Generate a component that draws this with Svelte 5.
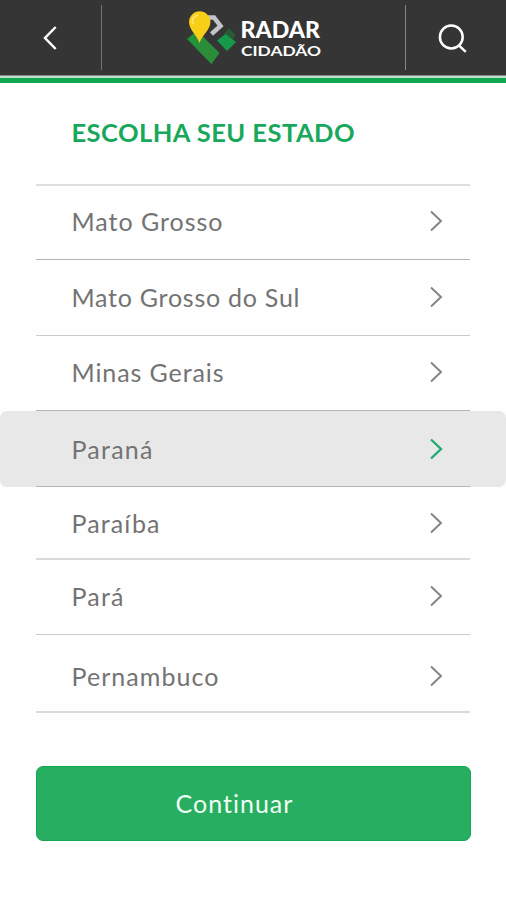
<script>
    const states = [
        { name: 'Mato Grosso', height: 74, pad: 20, width: 151, line: 'dark' },
        { name: 'Mato Grosso do Sul', height: 76, pad: 22, width: 228, line: 'mid' },
        { name: 'Minas Gerais', height: 75, pad: 20.5, width: 152, line: 'dark' },
        { name: 'Paraná', height: 76, pad: 22.5, width: 81, line: 'dark' },
        { name: 'Paraíba', height: 73, pad: 20.5, width: 88, line: 'thick' },
        { name: 'Pará', height: 75, pad: 21, width: 52, line: 'mid' },
        { name: 'Pernambuco', height: 78, pad: 25.5, width: 147, line: 'thick' }
    ];

    let selected = $state('Paraná');
</script>

<div class="screen">
    <header>
        <button class="side back" aria-label="Voltar">
            <svg width="20" height="28" viewBox="0 0 20 28">
                <path d="M14.700 3 L4 14 L14.700 25" />
            </svg>
        </button>
        <div class="logo">
            <svg width="150" height="70" viewBox="180 4 150 70">
                <path d="M187 39 L197 31 L219.500 53 L211.500 64 Z" fill="#249238" />
                <path d="M201 35 L217 51 L211.500 64 L196 48 Z" fill="#2b8d3a" />
                <path d="M224 34 L229 28 L235.500 35 L233 39 Z" fill="#285b35" />
                <path d="M217 40.500 L225.500 34 L236 42 L227 51 Z" fill="#16994a" />
                <path d="M208 17.500 L214 17.500 L220.500 26 L211.500 34" fill="none" stroke="#c4c3c7" stroke-width="4.5" />
                <path d="M199.500 43 C197 35 189 30 189 22 A10.700 10.700 0 0 1 210.400 22 C210.400 30 202 35 199.500 43 Z" fill="#f8cf17" />
                <path d="M198 15 C193 16 191.500 20 193 24" fill="none" stroke="#fbe36a" stroke-width="2" />
                <text class="radar" x="240.500" y="37.800" textLength="79.500" lengthAdjust="spacingAndGlyphs">RADAR</text>
                <text class="cidadao" x="241" y="56.400" textLength="80" lengthAdjust="spacingAndGlyphs">CIDADÃO</text>
            </svg>
        </div>
        <button class="side search" aria-label="Buscar">
            <svg width="32" height="32" viewBox="0 0 32 32">
                <circle cx="14.300" cy="14" r="11.400" />
                <path d="M21.300 21.800 L28.800 28.800" />
            </svg>
        </button>
    </header>

    <main>
        <h1>
            <svg width="300" height="34">
                <text x="-0.5" y="25" textLength="283">ESCOLHA SEU ESTADO</text>
            </svg>
        </h1>

        <ul>
            {#each states as state}
                <li class:active={selected === state.name}>
                    <button
                        class="row {state.line}"
                        style="height: {state.height}px; padding-top: {state.pad}px"
                        onclick={() => (selected = state.name)}
                    >
                        <svg class="name" width="260" height="30">
                            <text x="-0.5" y="25" textLength={state.width}>{state.name}</text>
                        </svg>
                        <svg class="chevron" width="16" height="30" viewBox="0 0 16 30">
                            <path d="M3 5.500 L13 15 L3 24.500" />
                        </svg>
                    </button>
                </li>
            {/each}
        </ul>

        <button class="continue">Continuar</button>
    </main>
</div>

<style>
    :global(body) {
        margin: 0;
        background: #fefefe;
    }

    .screen {
        width: 506px;
        height: 900px;
        overflow: hidden;
        font-family: Lato, "Open Sans", sans-serif;
        background: #fefefe;
    }

    button {
        border: 0;
        margin: 0;
        padding: 0;
        background: none;
        font: inherit;
        cursor: pointer;
    }

    svg {
        display: block;
    }

    header {
        display: flex;
        align-items: flex-start;
        box-sizing: border-box;
        height: 83px;
        padding-top: 5px;
        background: linear-gradient(#363536 75px, #c2dfcf 76px, #c2dfcf 78px, #10a751 78px);
    }

    .side {
        box-sizing: border-box;
        display: flex;
        align-items: center;
        justify-content: center;
        height: 65px;
    }

    .side svg {
        fill: none;
        stroke: #fff;
        stroke-width: 2.5;
    }

    .back {
        width: 102px;
        border-right: 1px solid #737273;
    }

    .search {
        width: 101px;
        padding-right: 6px;
        padding-top: 3px;
        border-left: 1px solid #868586;
    }

    .logo {
        flex: 1;
        height: 70px;
        padding-left: 78px;
        margin-top: -1px;
    }

    .radar {
        font-size: 22.500px;
        font-weight: 900;
        fill: #fff;
    }

    .cidadao {
        font-size: 13.800px;
        font-weight: 700;
        fill: #fff;
    }

    h1 {
        margin: 0 36px;
        padding: 34px 0 0 36px;
        height: 67px;
        border-bottom: 2px solid #dedede;
        font-size: 25.500px;
        font-weight: 700;
        fill: #18a85b;
    }

    ul {
        margin: 0;
        padding: 0;
        list-style: none;
    }

    li.active {
        background: #e8e8e8;
        border-radius: 7px;
    }

    .row {
        box-sizing: border-box;
        display: flex;
        align-items: flex-start;
        justify-content: space-between;
        width: 434px;
        margin: 0 36px;
        padding: 0 26px 0 36px;
        border-bottom: 1px solid #b5b5b5;
    }

    .row.mid {
        border-bottom-color: #cbcbcb;
    }

    .row.thick {
        border-bottom: 2px solid #dadada;
    }

    .name {
        font-size: 25px;
        fill: #737373;
        overflow: visible;
    }

    .chevron {
        fill: none;
        stroke: #858585;
        stroke-width: 2;
    }

    .active .chevron {
        stroke: #1fa971;
        stroke-width: 2.3;
    }

    .continue {
        display: block;
        box-sizing: border-box;
        width: 435px;
        height: 75px;
        margin: 53px 0 0 35.500px;
        padding: 0 37px 2px 0;
        border: 1px solid #14a653;
        border-radius: 7px;
        background: #27ae60;
        color: #f0fff3;
        font-size: 25px;
        letter-spacing: 1px;
    }
</style>
